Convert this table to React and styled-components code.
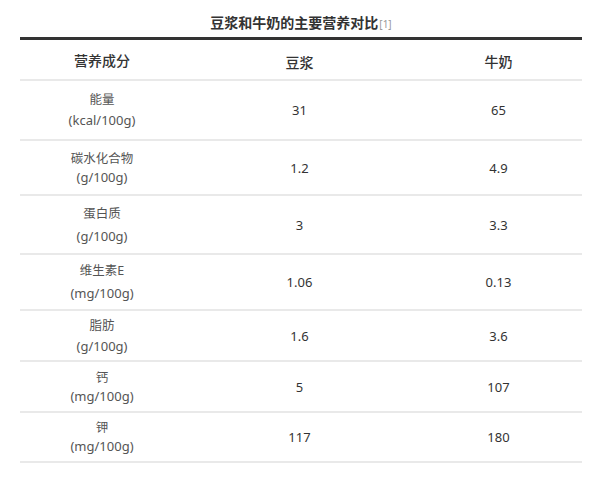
import React from "react";
import styled, { createGlobalStyle } from "styled-components";

const Global = createGlobalStyle`
  html, body { margin: 0; padding: 0; background: #fff; }
  body { font-family: "Noto Sans", "Noto Sans CJK SC", sans-serif; }
`;

const Page = styled.div`
  padding: 0 18px 0 20px;
  width: 562px;
`;

const Title = styled.div`
  margin-top: 14px;
  height: 23px;
  line-height: 18px;
  text-align: center;
  font-size: 14px;
  font-weight: bold;
  color: #333;
`;

const Ref = styled.sup`
  font-size: 10px;
  font-weight: normal;
  color: #999;
  vertical-align: baseline;
  margin-left: 1px;
`;

const Table = styled.div`
  border-top: 3px solid #333;
  display: flex;
  flex-direction: column;
`;

const Row = styled.div`
  display: grid;
  grid-template-columns: 164px 231px 167px;
  height: ${(p) => p.$h}px;
  box-sizing: border-box;
  border-bottom: 2px solid #e9e9e9;
`;

const Cell = styled.div`
  display: flex;
  align-items: center;
  justify-content: center;
  text-align: center;
  font-size: ${(p) => (p.$head ? 14 : 13)}px;
  font-weight: ${(p) => (p.$head ? 500 : 400)};
  color: #333;
  padding-top: ${(p) => p.$shift || 0}px;
`;

const Label = styled.div`
  display: flex;
  flex-direction: column;
  align-items: center;
  gap: ${(p) => p.$gap}px;
  color: #555;
`;

const Name = styled.span`
  font-size: 12.5px;
  line-height: 18px;
`;

const Unit = styled.span`
  font-size: 13px;
  line-height: 18px;
`;

const rows = [
  { name: "能量", unit: "(kcal/100g)", a: "31", b: "65", h: 60, gap: 2 },
  { name: "碳水化合物", unit: "(g/100g)", a: "1.2", b: "4.9", h: 55, gap: 0 },
  { name: "蛋白质", unit: "(g/100g)", a: "3", b: "3.3", h: 59, gap: 4 },
  { name: "维生素E", unit: "(mg/100g)", a: "1.06", b: "0.13", h: 56, gap: 4 },
  { name: "脂肪", unit: "(g/100g)", a: "1.6", b: "3.6", h: 51, gap: 2 },
  { name: "钙", unit: "(mg/100g)", a: "5", b: "107", h: 51, gap: 0 },
  { name: "钾", unit: "(mg/100g)", a: "117", b: "180", h: 50, gap: 0 },
];

export default function App() {
  return (
    <>
      <Global />
      <Page>
        <Title>
          豆浆和牛奶的主要营养对比<Ref>[1]</Ref>
        </Title>
        <Table>
          <Row $h={41}>
            <Cell $head>营养成分</Cell>
            <Cell $head $shift={4}>豆浆</Cell>
            <Cell $head $shift={2}>牛奶</Cell>
          </Row>
          {rows.map((r) => (
            <Row key={r.name} $h={r.h}>
              <Cell>
                <Label $gap={r.gap}>
                  <Name>{r.name}</Name>
                  <Unit>{r.unit}</Unit>
                </Label>
              </Cell>
              <Cell>{r.a}</Cell>
              <Cell>{r.b}</Cell>
            </Row>
          ))}
        </Table>
      </Page>
    </>
  );
}
